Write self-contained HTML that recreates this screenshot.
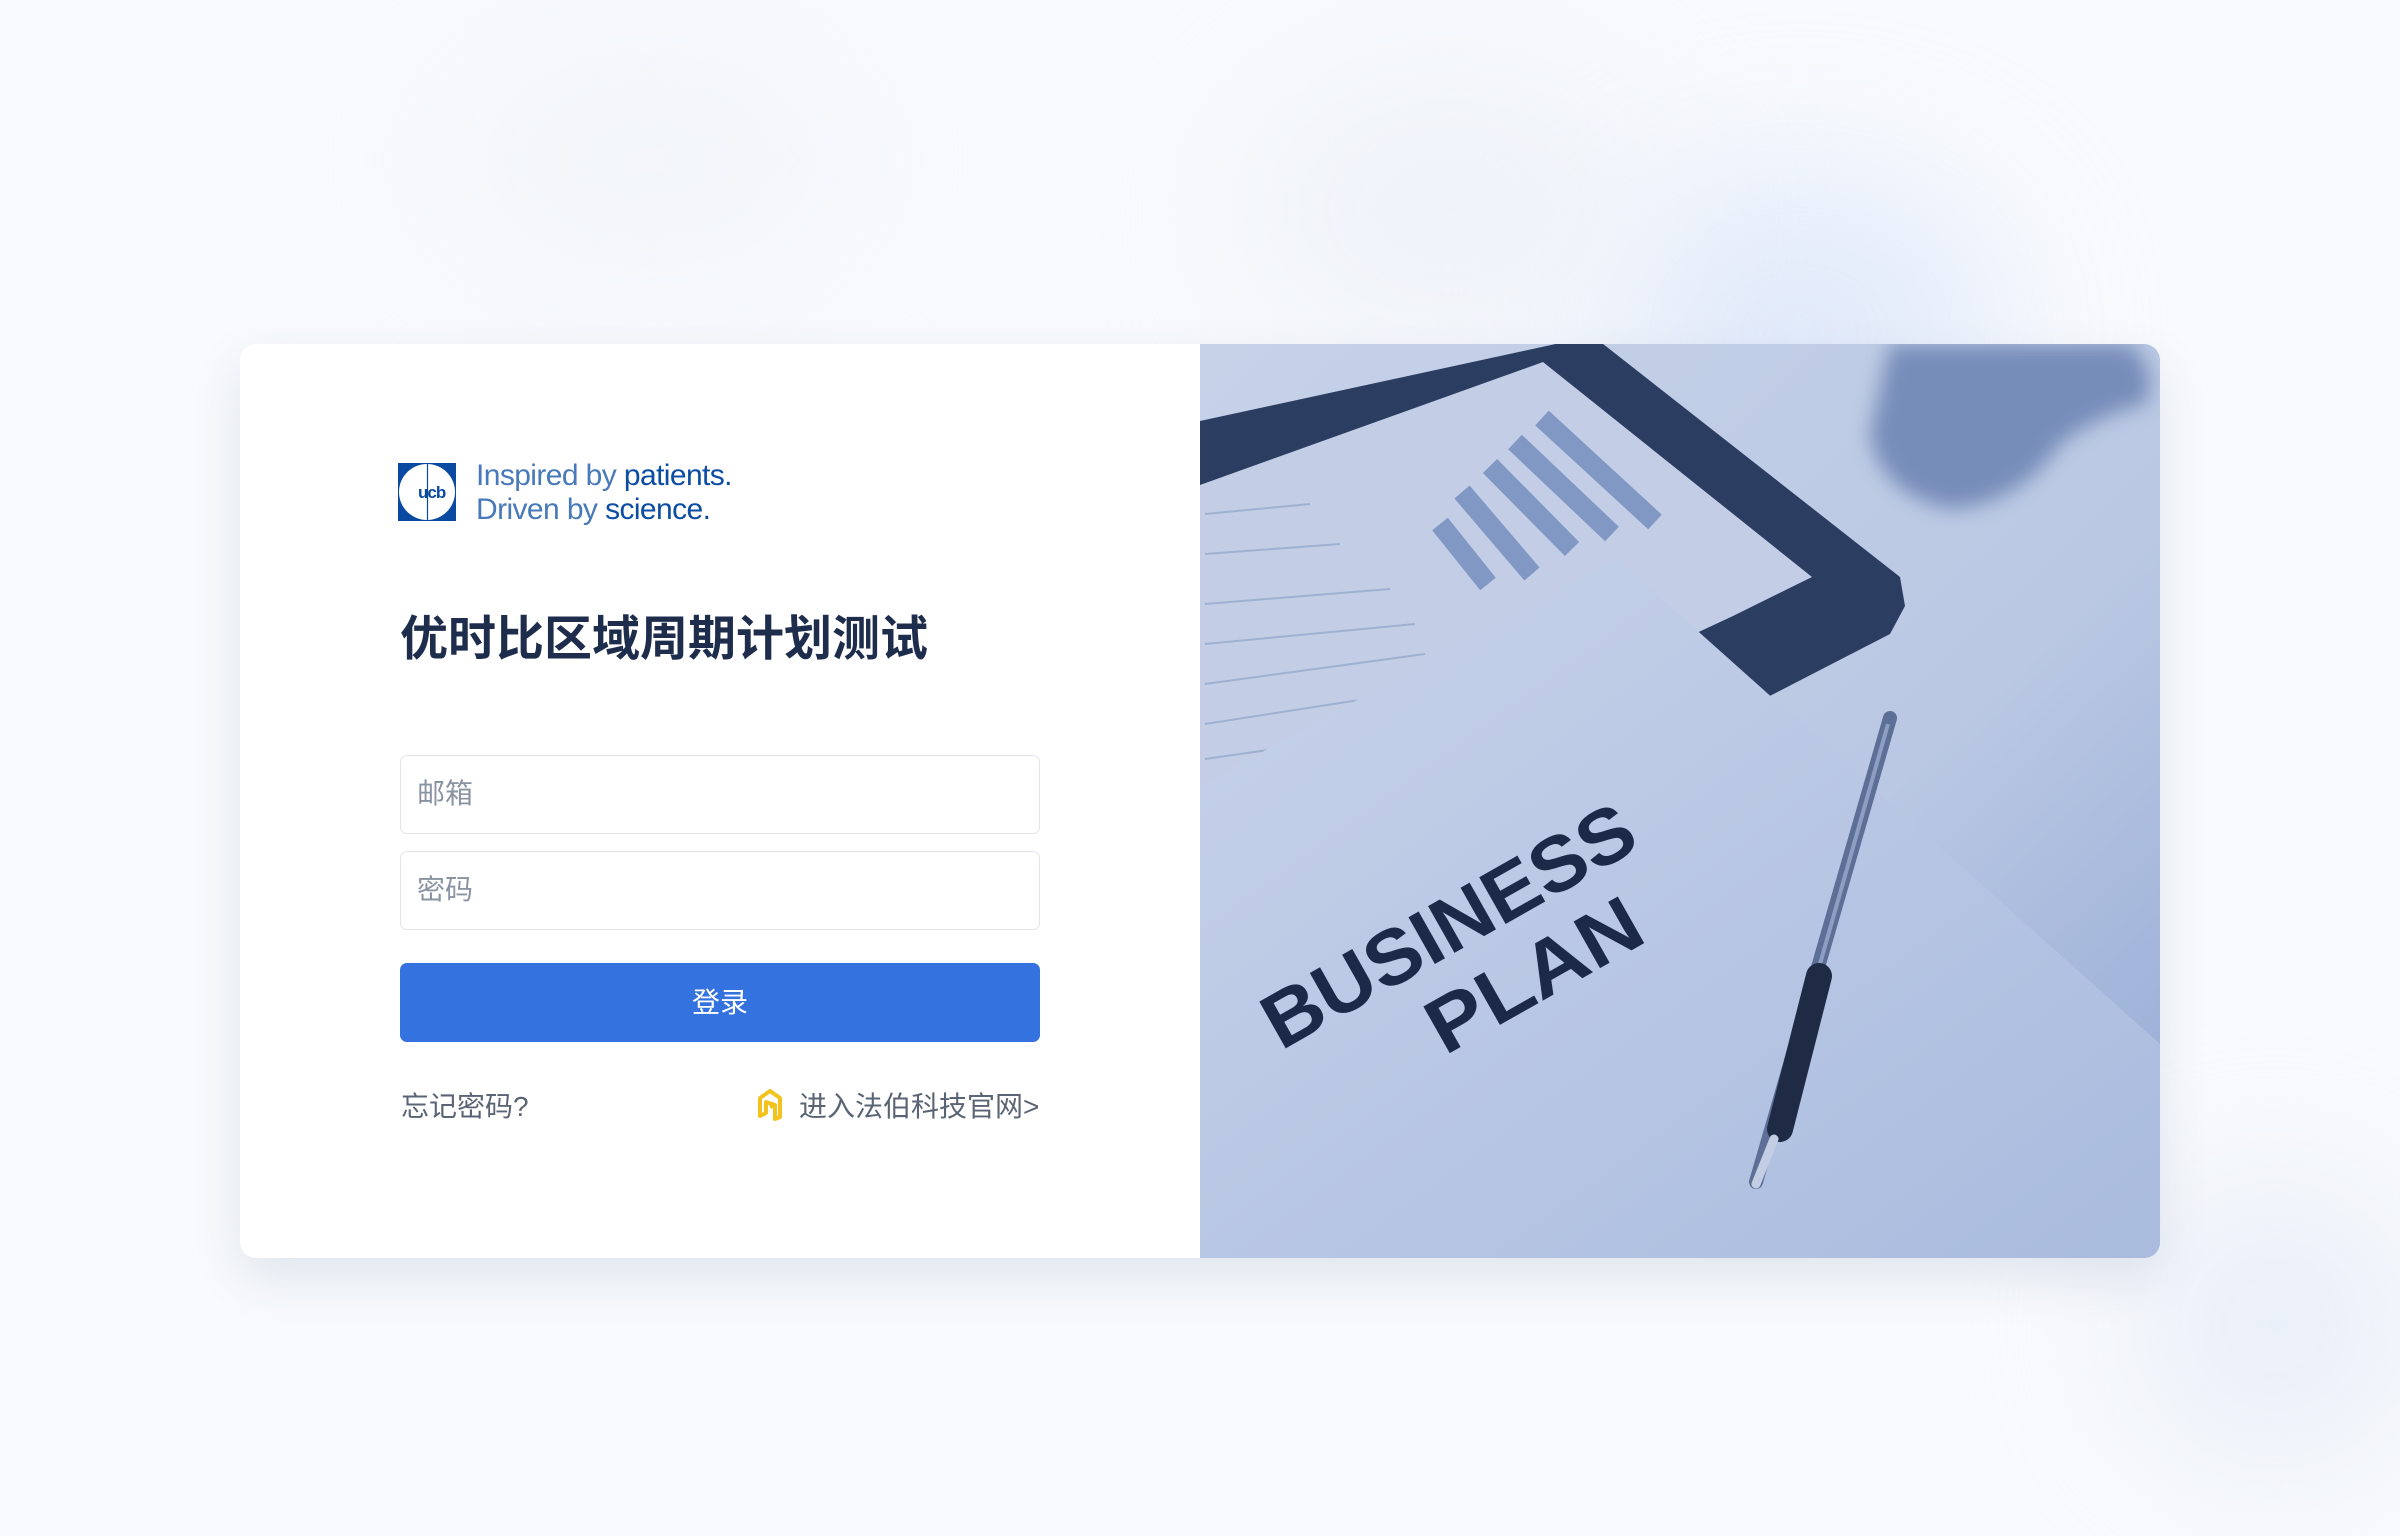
<!DOCTYPE html>
<html><head><meta charset="utf-8"><style>
*{margin:0;padding:0;box-sizing:border-box}
body{width:2400px;height:1536px;overflow:hidden;background:#f8fafd;font-family:"Liberation Sans","Noto Sans CJK SC",sans-serif;position:relative}
.blob{position:absolute;border-radius:50%;filter:blur(80px)}
.card{position:absolute;left:240px;top:344px;width:1920px;height:914px;background:#fff;border-radius:16px;box-shadow:0 20px 50px rgba(60,80,120,.12);overflow:hidden}
.right{position:absolute;left:960px;top:0;width:960px;height:914px}
.input{position:absolute;left:160px;width:640px;height:79px;border:1.5px solid #e1e4ea;border-radius:7px;font-size:28px;color:#8a93a3;padding-left:16px;line-height:76px}
.btn{position:absolute;left:160px;top:619px;width:640px;height:79px;background:#3372df;border-radius:7px;color:#fff;font-size:28px;text-align:center;line-height:79px}
.link{position:absolute;top:746px;font-size:28px;color:#5b6475;line-height:34px}
</style></head><body>
<div class="blob" style="left:1600px;top:180px;width:400px;height:300px;background:#dbe6fa;opacity:.8"></div>
<div class="blob" style="left:1250px;top:80px;width:400px;height:260px;background:#eef2f9"></div>
<div class="blob" style="left:2150px;top:1200px;width:250px;height:250px;background:#e6ecf7"></div>
<div class="blob" style="left:450px;top:60px;width:400px;height:200px;background:#f1f4f9"></div>
<div class="card">
  <svg style="position:absolute;left:158px;top:119px" width="58" height="58" viewBox="0 0 58 58">
    <rect width="58" height="58" fill="#0a4aa0"/>
    <circle cx="29" cy="29" r="28" fill="#fff"/>
    <line x1="29.5" y1="0" x2="29.5" y2="58" stroke="#0a4aa0" stroke-width="1.2"/>
    <text x="20" y="35" font-family="Liberation Sans" font-weight="bold" font-size="17" fill="#0a4aa0" letter-spacing="-1">ucb</text>
  </svg>
  <div style="position:absolute;left:236px;top:115px;color:#0b4da2;font-size:30px;line-height:34px;letter-spacing:-0.6px">
    <div><span style="opacity:.75">Inspired by</span> <span>patients.</span></div>
    <div><span style="opacity:.75">Driven by</span> <span>science.</span></div>
  </div>
  <div style="position:absolute;left:160px;top:266px;font-size:48px;font-weight:bold;color:#1f2d4d;line-height:60px">优时比区域周期计划测试</div>
  <div class="input" style="top:411px">邮箱</div>
  <div class="input" style="top:507px">密码</div>
  <div class="btn">登录</div>
  <div class="link" style="left:161px">忘记密码?</div>
  <svg style="position:absolute;left:518px;top:745px" width="24" height="32" viewBox="0 0 24 32">
    <path d="M2 9 L12 2 L22 9 L22 28 L17 30 L17 16 L8 13 L8 24 L2 27 Z M12 18 L17 16" fill="none" stroke="#f3c21c" stroke-width="4" stroke-linejoin="round"/>
  </svg>
  <div class="link" style="left:559px">进入法伯科技官网&gt;</div>
  <div class="right">
    <svg width="960" height="914" viewBox="0 0 960 914">
      <defs>
        <linearGradient id="bg" x1="0" y1="0" x2="1" y2="1">
          <stop offset="0" stop-color="#c6d2e8"/><stop offset=".6" stop-color="#bac8e3"/><stop offset="1" stop-color="#93a9d5"/>
        </linearGradient>
        <linearGradient id="pp" x1="0" y1="0" x2="1" y2="1">
          <stop offset="0" stop-color="#c8d3ea"/><stop offset="1" stop-color="#a9bbde"/>
        </linearGradient>
        <filter id="bl"><feGaussianBlur stdDeviation="10"/></filter>
      </defs>
      <rect width="960" height="914" fill="url(#bg)"/>
      <path d="M690 0 L930 0 Q960 30 945 60 Q900 70 860 100 Q820 160 750 165 Q680 150 670 90 Z" fill="#6b82b2" opacity=".85" filter="url(#bl)"/>
      <path d="M0 77 L374 -4 L398 -4 L700 233 L705 262 L690 290 L560 357 L0 560Z" fill="#2c3d62"/>
      <path d="M0 141 L343 18 L612 233 L533 272 L0 520Z" fill="#c3cee6"/>
      <g stroke="#8198c5" stroke-width="20">
        <line x1="240" y1="180" x2="288" y2="240"/>
        <line x1="262" y1="148" x2="332" y2="230"/>
        <line x1="290" y1="122" x2="372" y2="205"/>
        <line x1="315" y1="98" x2="412" y2="190"/>
        <line x1="342" y1="74" x2="455" y2="178"/>
      </g>
      <g stroke="#9fb0d1" stroke-width="2">
        <line x1="5" y1="170" x2="110" y2="160"/><line x1="5" y1="210" x2="140" y2="200"/>
        <line x1="5" y1="260" x2="190" y2="245"/><line x1="5" y1="300" x2="215" y2="280"/>
        <line x1="5" y1="340" x2="225" y2="310"/><line x1="5" y1="380" x2="230" y2="345"/>
        <line x1="5" y1="415" x2="215" y2="385"/>
      </g>
      <path d="M0 442 L416 214 L960 700 L960 914 L0 914Z" fill="url(#pp)"/>
      <g transform="translate(81 707) rotate(-29.5)" font-family="Liberation Sans" font-weight="bold" fill="#1d2a47">
        <text x="0" y="0" font-size="78" textLength="415" lengthAdjust="spacingAndGlyphs">BUSINESS</text>
        <text x="140" y="85" font-size="78" textLength="235" lengthAdjust="spacingAndGlyphs">PLAN</text>
      </g>
      <line x1="690" y1="374" x2="556" y2="838" stroke="#5d6f96" stroke-width="14" stroke-linecap="round"/>
      <line x1="688" y1="380" x2="620" y2="620" stroke="#8e9ec2" stroke-width="4"/>
      <line x1="619" y1="632" x2="580" y2="785" stroke="#1f2a44" stroke-width="26" stroke-linecap="round"/>
      <line x1="574" y1="795" x2="556" y2="840" stroke="#c3cde3" stroke-width="9" stroke-linecap="round"/>
    </svg>
  </div>
</div>
</body></html>
